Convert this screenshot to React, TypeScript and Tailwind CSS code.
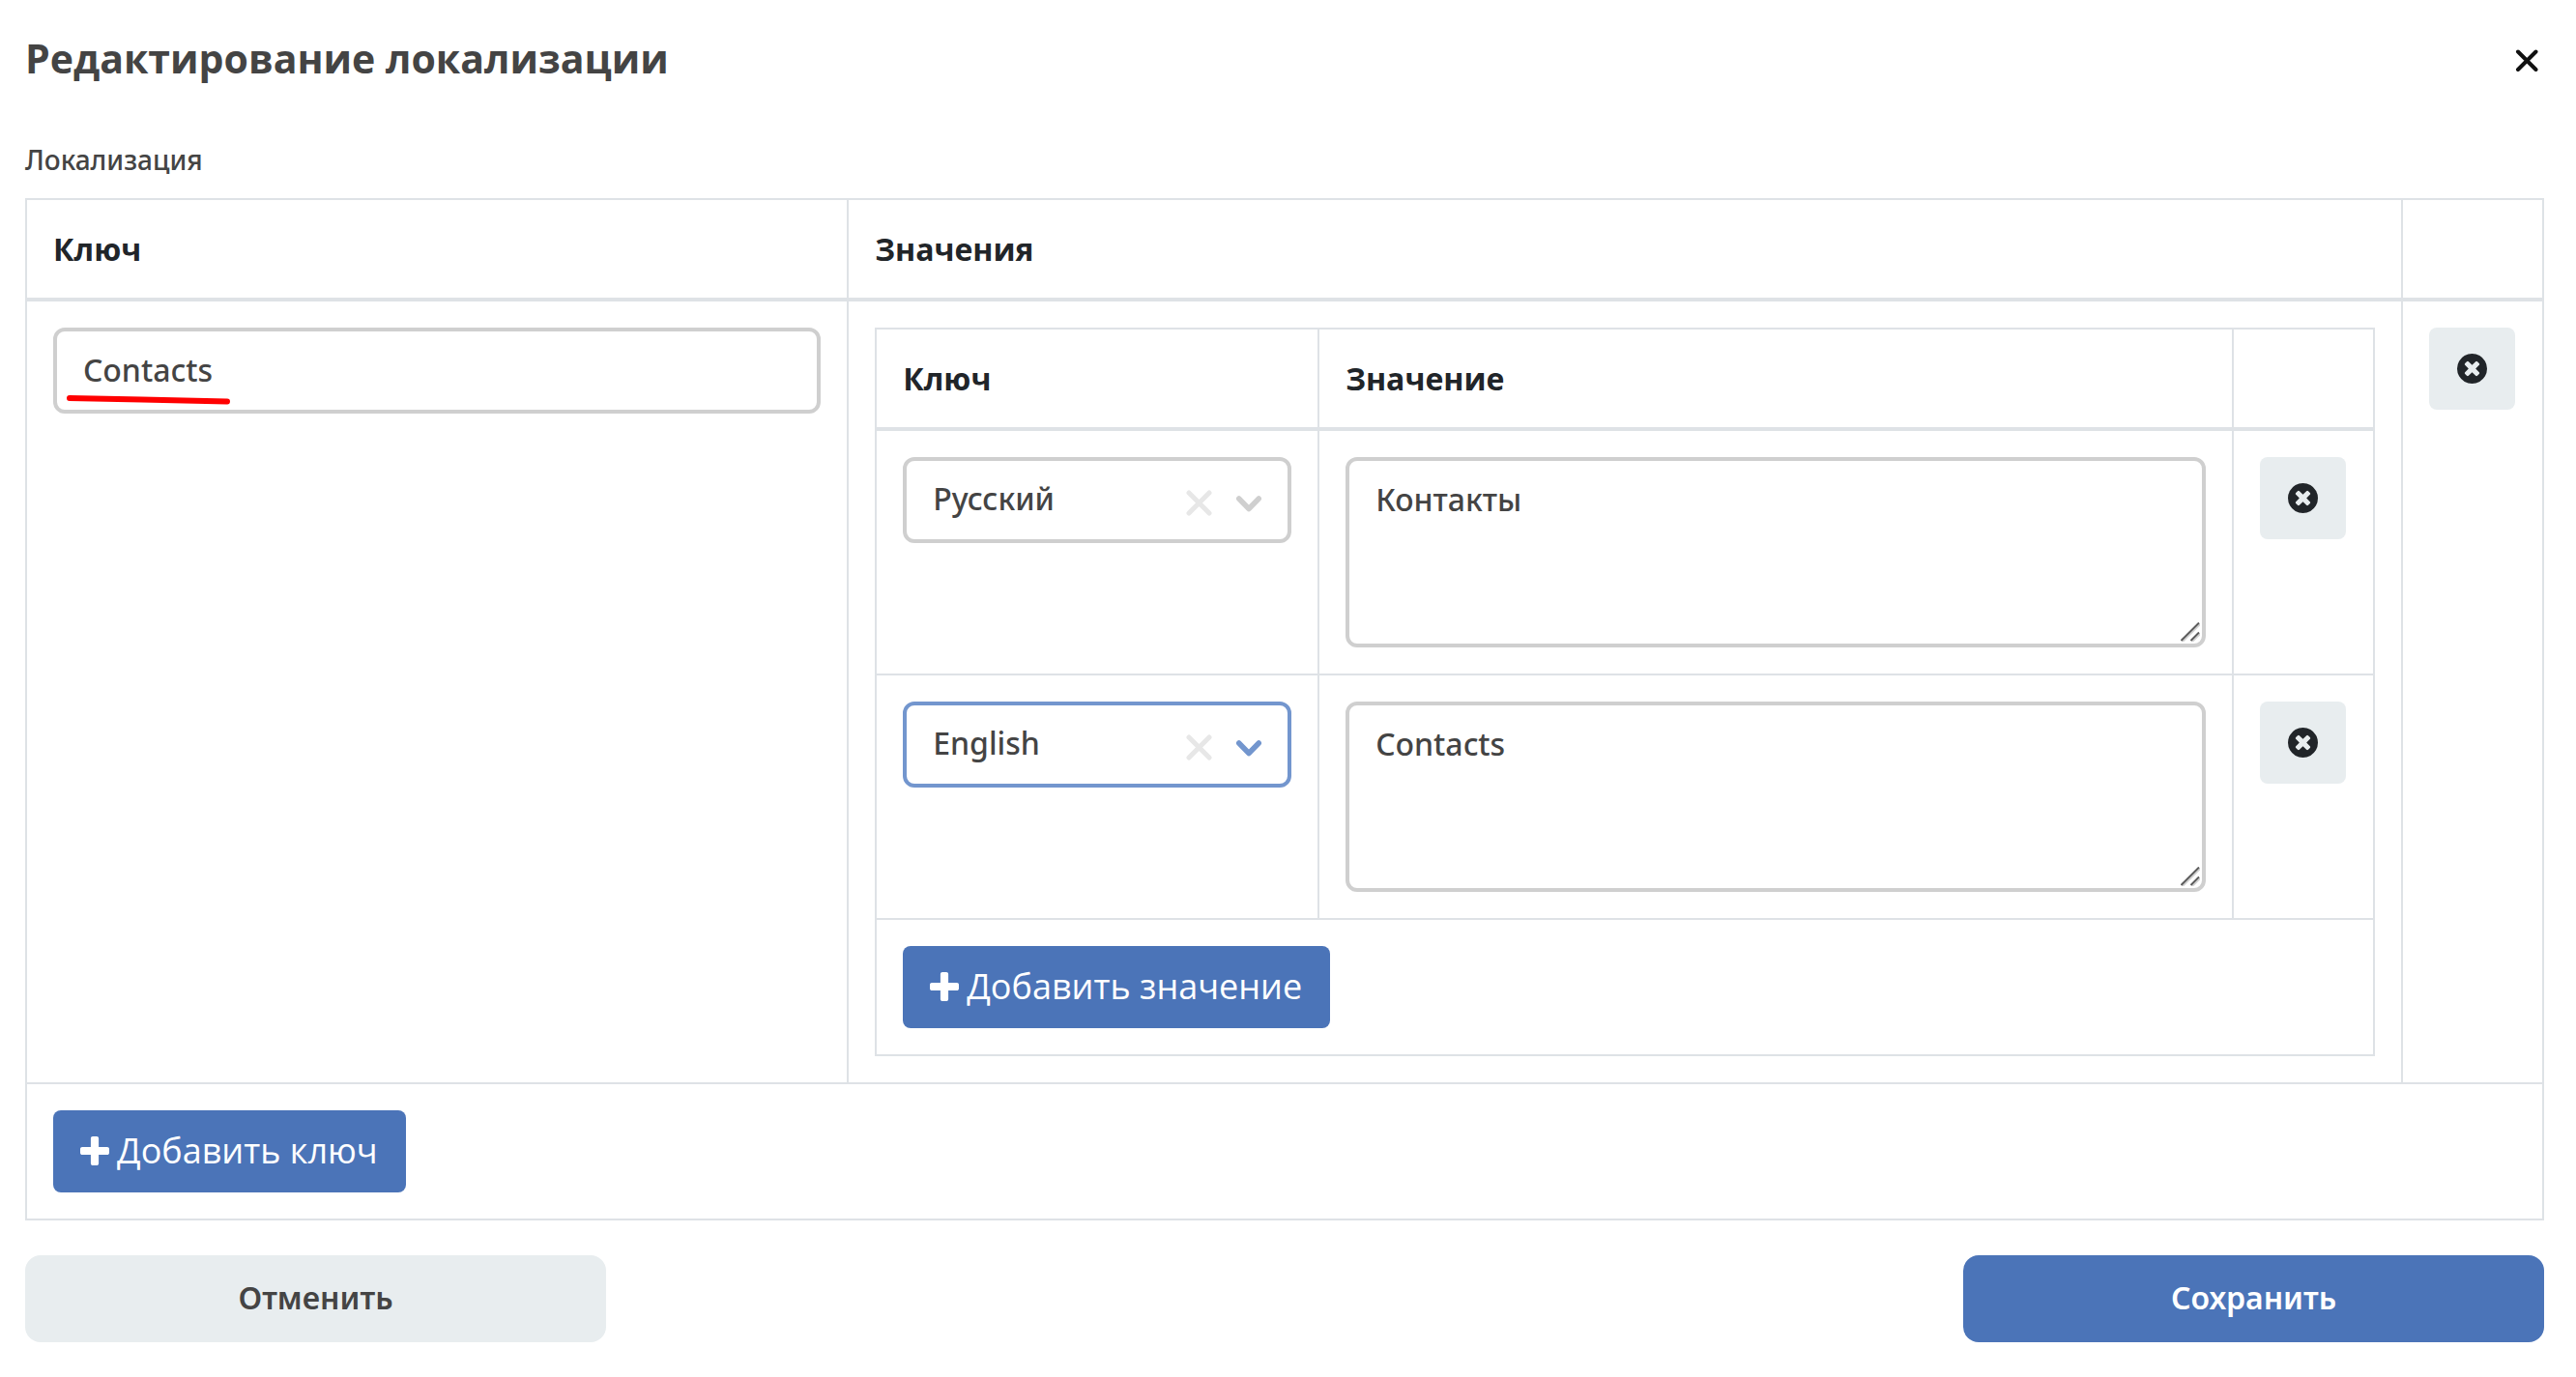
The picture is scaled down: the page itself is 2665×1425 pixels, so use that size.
import { useState } from "react";

const LANGUAGES = ["Русский", "English"];

function CloseIcon() {
  return (
    <svg className="size-6" viewBox="0 0 24 24" fill="none" stroke="#111111" strokeWidth="4" strokeLinecap="round" aria-hidden="true">
      <path d="M3 3.5L21.5 22M21.5 3.5L3 22" />
    </svg>
  );
}

function ClearIcon() {
  return (
    <svg className="size-7 overflow-visible" viewBox="0 0 28 28" fill="none" stroke="#e7e7e7" strokeWidth="5" strokeLinecap="round" aria-hidden="true">
      <path d="M4 6L25 27M25 6L4 27" />
    </svg>
  );
}

function ChevronIcon() {
  return (
    <svg className="size-7 overflow-visible" viewBox="0 0 28 28" fill="none" stroke="currentColor" strokeWidth="5.5" strokeLinecap="round" strokeLinejoin="round" aria-hidden="true">
      <path d="M3.75 12L14 22.5L24.25 12" />
    </svg>
  );
}

function ResizeGrip() {
  return (
    <svg className="pointer-events-none absolute right-1.5 bottom-1.5 size-5" viewBox="0 0 20 20" fill="none" strokeWidth="2" aria-hidden="true">
      <path d="M2 20L20 2M12 20L20 12" stroke="#d4d4d4" />
      <path d="M0.5 19L19 0.5M10.5 19L19 10.5" stroke="#5c5c5c" />
    </svg>
  );
}

function TimesCircleIcon() {
  return (
    <svg className="size-[31px]" viewBox="0 128 1536 1536" fill="#212529" aria-hidden="true">
      <path d="M1149 1122q0-26-19-45l-181-181 181-181q19-19 19-45 0-27-19-46l-90-90q-19-19-46-19-26 0-45 19l-181 181-181-181q-19-19-45-19-27 0-46 19l-90 90q-19 19-19 46 0 26 19 45l181 181-181 181q-19 19-19 45 0 27 19 46l90 90q19 19 46 19 26 0 45-19l181-181 181 181q19 19 45 19 27 0 46-19l90-90q19-19 19-46zm387-226q0 209-103 385.5t-279.5 279.5-385.5 103-385.5-103-279.5-279.5-103-385.5 103-385.5 279.5-279.5 385.5-103 385.5 103 279.5 279.5 103 385.5z" />
    </svg>
  );
}

function PlusIcon() {
  return (
    <svg className="size-[30px]" viewBox="0 128 1408 1408" fill="currentColor" aria-hidden="true">
      <path d="M1408 736v192q0 40-28 68t-68 28h-416v416q0 40-28 68t-68 28h-192q-40 0-68-28t-28-68v-416h-416q-40 0-68-28t-28-68v-192q0-40 28-68t68-28h416v-416q0-40 28-68t68-28h192q40 0 68 28t28 68v416h416q40 0 68 28t28 68z" />
    </svg>
  );
}

function RemoveButton({ label }: { label: string }) {
  return (
    <button type="button" aria-label={label} className="flex h-[85px] w-[89px] items-center justify-center rounded-lg bg-[#e8edef]">
      <TimesCircleIcon />
    </button>
  );
}

function AddButton({ children }: { children: string }) {
  return (
    <button type="button" className="flex h-[85px] items-center gap-2 rounded-lg bg-[#4b74b8] pr-[29px] pb-0.5 pl-7 text-4xl text-white">
      <PlusIcon />
      {children}
    </button>
  );
}

const field =
  "block w-full rounded-xl border-4 bg-white font-['Noto_Sans','Open_Sans',sans-serif] font-medium text-[#444444] outline-none";

function LanguageSelect({ initial, active }: { initial: string; active?: boolean }) {
  const [value, setValue] = useState(initial);
  return (
    <div className={active ? "relative text-[#7396ce]" : "relative text-[#cfcfcf]"}>
      <select
        aria-label="Ключ"
        value={value}
        onChange={(e) => setValue(e.target.value)}
        className={`${field} h-[89px] appearance-none pr-28 pb-[3px] pl-[27px] ${active ? "border-[#7396ce]" : "border-[#cfcfcf]"}`}
      >
        <option value="" />
        {LANGUAGES.map((l) => (
          <option key={l} value={l}>
            {l}
          </option>
        ))}
      </select>
      <div className="pointer-events-none absolute inset-y-0 right-[30px] flex items-center gap-6">
        <button type="button" aria-label="Очистить" className="pointer-events-auto" onClick={() => setValue("")}>
          <ClearIcon />
        </button>
        <ChevronIcon />
      </div>
    </div>
  );
}

const th = "h-[105px] border-r-2 border-b-4 border-[#dee2e6] px-[27px] text-left font-bold";
const td = "border-r-2 border-b-2 border-[#dee2e6] p-[27px] align-top";
const tableCls = "w-full table-fixed border-separate border-spacing-0 border-t-2 border-l-2 border-[#dee2e6] text-[32px] leading-[48px] text-[#212529]";

function ValuesTable() {
  const rows = [
    { lang: "Русский", text: "Контакты", active: false },
    { lang: "English", text: "Contacts", active: true },
  ];
  return (
    <table className={tableCls}>
      <colgroup>
        <col className="w-[29.55%]" />
        <col />
        <col className="w-[146px]" />
      </colgroup>
      <thead>
        <tr>
          <th className={th}>Ключ</th>
          <th className={th}>Значение</th>
          <th className={th} />
        </tr>
      </thead>
      <tbody>
        {rows.map((row) => (
          <tr key={row.lang}>
            <td className={td}>
              <LanguageSelect initial={row.lang} active={row.active} />
            </td>
            <td className={td}>
              <div className="relative">
                <textarea
                  aria-label="Значение"
                  defaultValue={row.text}
                  className={`${field} h-[197px] resize-none border-[#cfcfcf] px-[27px] py-4`}
                />
                <ResizeGrip />
              </div>
            </td>
            <td className={td}>
              <RemoveButton label="Удалить значение" />
            </td>
          </tr>
        ))}
        <tr>
          <td colSpan={3} className={td}>
            <AddButton>Добавить значение</AddButton>
          </td>
        </tr>
      </tbody>
    </table>
  );
}

export default function App() {
  return (
    <form
      className="min-h-screen bg-white pr-[33px] pb-9 pl-[26px] font-['Open_Sans','Noto_Sans',sans-serif] text-[#444444]"
      onSubmit={(e) => e.preventDefault()}
    >
      <header className="flex h-[124px] items-center justify-between pr-1.5">
        <h1 className="pb-1 text-[41px] leading-[56px] font-bold">Редактирование локализации</h1>
        <button type="button" aria-label="Закрыть">
          <CloseIcon />
        </button>
      </header>

      <div className="pt-[21px] pb-5 font-['Noto_Sans','Open_Sans',sans-serif] text-[28px] leading-10 font-medium">Локализация</div>

      <table aria-label="Локализация" className={tableCls}>
        <colgroup>
          <col className="w-[32.65%]" />
          <col />
          <col className="w-[146px]" />
        </colgroup>
        <thead>
          <tr>
            <th className={th}>Ключ</th>
            <th className={th}>Значения</th>
            <th className={th} />
          </tr>
        </thead>
        <tbody>
          <tr>
            <td className={td}>
              <div className="relative">
                <input
                  type="text"
                  aria-label="Ключ"
                  defaultValue="Contacts"
                  className={`${field} h-[89px] border-[#cfcfcf] px-[27px] pb-[3px]`}
                />
                <svg className="pointer-events-none absolute bottom-2 left-3 h-3 w-[174px]" viewBox="0 0 174 12" fill="none" stroke="#ff0000" strokeWidth="6" strokeLinecap="round" aria-hidden="true">
                  <path d="M5 4L80 5.4L168 7.4" />
                </svg>
              </div>
            </td>
            <td className={td}>
              <ValuesTable />
            </td>
            <td className={td}>
              <RemoveButton label="Удалить ключ" />
            </td>
          </tr>
          <tr>
            <td colSpan={3} className={td}>
              <AddButton>Добавить ключ</AddButton>
            </td>
          </tr>
        </tbody>
      </table>

      <footer className="flex justify-between pt-9 font-['Noto_Sans','Open_Sans',sans-serif] text-[32px] font-semibold">
        <button type="button" className="h-[90px] w-[601px] rounded-2xl bg-[#e8edef] pb-0.5">
          Отменить
        </button>
        <button type="submit" className="h-[90px] w-[601px] rounded-2xl bg-[#4b74b8] pb-0.5 text-white">
          Сохранить
        </button>
      </footer>
    </form>
  );
}
